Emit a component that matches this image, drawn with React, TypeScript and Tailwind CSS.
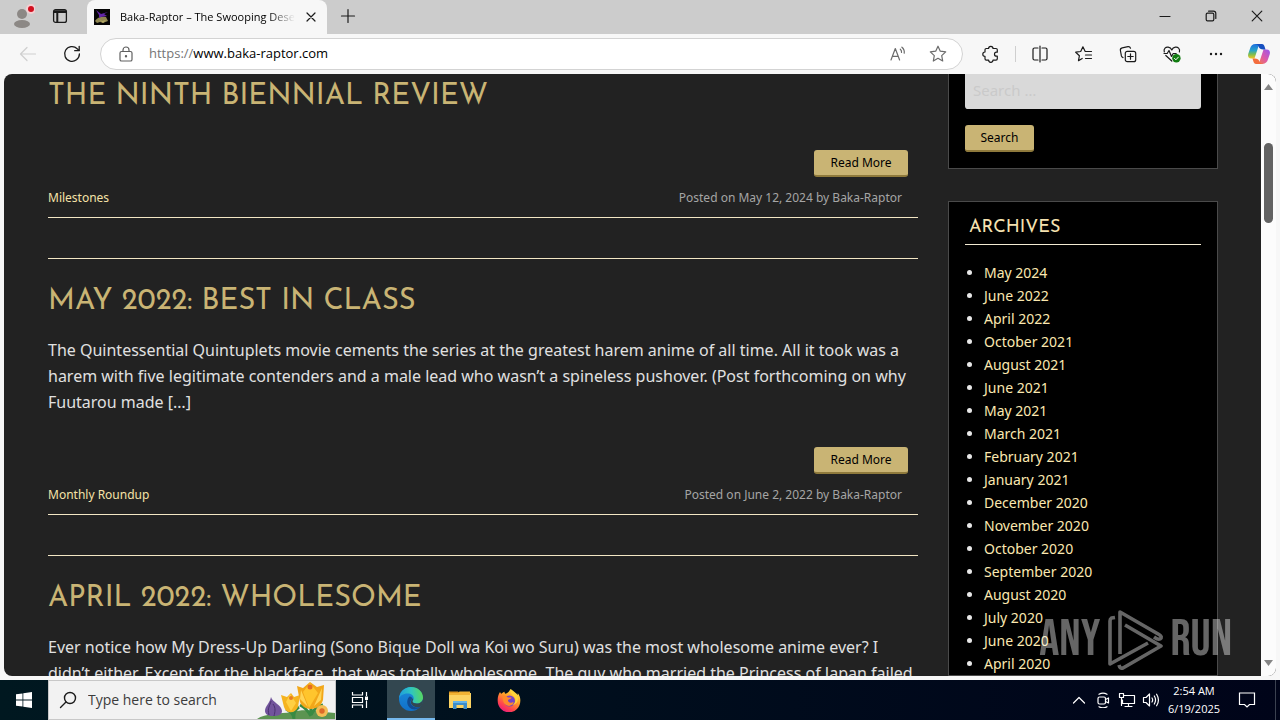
import React from "react";

type Post = { title: string; body?: string; tag: string; date: string };

const posts: Post[] = [
  { title: "The Ninth Biennial Review", tag: "Milestones", date: "May 12, 2024" },
  {
    title: "May 2022: Best in Class",
    body: "The Quintessential Quintuplets movie cements the series at the greatest harem anime of all time. All it took was a harem with five legitimate contenders and a male lead who wasn’t a spineless pushover. (Post forthcoming on why Fuutarou made […]",
    tag: "Monthly Roundup",
    date: "June 2, 2022",
  },
  {
    title: "April 2022: Wholesome",
    body: "Ever notice how My Dress-Up Darling (Sono Bique Doll wa Koi wo Suru) was the most wholesome anime ever? I didn’t either. Except for the blackface, that was totally wholesome. The guy who married the Princess of Japan failed […]",
    tag: "Monthly Roundup",
    date: "May 1, 2022",
  },
];

const archives = [
  "May 2024", "June 2022", "April 2022", "October 2021", "August 2021", "June 2021",
  "May 2021", "March 2021", "February 2021", "January 2021", "December 2020",
  "November 2020", "October 2020", "September 2020", "August 2020", "July 2020",
  "June 2020", "April 2020",
];

function Line({ size = 20, children, className = "" }: { size?: number; children: React.ReactNode; className?: string }) {
  return (
    <svg width={size} height={size} viewBox={`0 0 ${size} ${size}`} fill="none" stroke="currentColor" strokeWidth="1.2" strokeLinecap="round" strokeLinejoin="round" className={className} aria-hidden="true">
      {children}
    </svg>
  );
}

function IconButton({ label, className = "w-11", children }: { label: string; className?: string; children: React.ReactNode }) {
  return (
    <button type="button" aria-label={label} className={`flex h-8 shrink-0 items-center justify-center ${className}`}>
      {children}
    </button>
  );
}

function TitleBar() {
  return (
    <header className="flex h-[34px] shrink-0 bg-[#cccccc] text-[#1b1b1b]">
      <IconButton label="Profile" className="ml-1 w-9">
        <svg width="26" height="26" viewBox="0 0 26 26" aria-hidden="true">
          <circle cx="13" cy="11" r="5" fill="#8c8885" />
          <ellipse cx="13" cy="21" rx="8" ry="4" fill="#8c8885" />
          <circle cx="22" cy="6" r="5" fill="#f4cfd2" />
          <circle cx="22" cy="6" r="3" fill="#d1101f" />
        </svg>
      </IconButton>
      <IconButton label="Tab actions" className="w-10">
        <Line size={16}>
          <rect x="1.6" y="1.6" width="12.8" height="12.8" rx="2" strokeWidth="1.3" />
          <path d="M2 3.2H14M5.3 4V14" strokeWidth="2" strokeLinecap="butt" />
          <path d="M2 4.4H14" strokeWidth="1.2" />
        </Line>
      </IconButton>
      <div className="ml-[7px] flex w-60 items-center rounded-t-lg bg-[#f7f7f7] pl-[7px] pr-2">
        <svg width="16" height="16" viewBox="0 0 16 16" aria-hidden="true">
          <path fill="#050505" d="M0 0h16v16H0z" />
          <path d="M1 12C3 8 8 7 12 8l2 4-5 2-3-1-3 1z" fill="#8f8650" />
          <path d="M2 1l5 4 7-2-4 2 3 2-6 1-2 1 0-3z" fill="#6326a8" />
          <path d="M5 10l3 2 4-1-3 3z" fill="#b5a965" />
        </svg>
        <span className="ml-2.5 flex-1 overflow-hidden whitespace-nowrap text-[11px] text-black [mask-image:linear-gradient(to_right,black_85%,transparent)]">
          Baka-Raptor – The Swooping Desert
        </span>
        <button type="button" aria-label="Close tab" className="ml-2 flex size-4 items-center justify-center">
          <Line size={12}><path d="M2 2l8 8M10 2l-8 8" /></Line>
        </button>
      </div>
      <IconButton label="New tab" className="w-[42px]">
        <Line size={16}><path d="M8 1.500v13M1.500 8h13" /></Line>
      </IconButton>
      <div className="ml-auto flex">
        <IconButton label="Minimize" className="w-[46px]">
          <Line size={12}><path d="M1 6.500h10" /></Line>
        </IconButton>
        <IconButton label="Restore" className="w-[46px]">
          <Line size={12}>
            <rect x="1.200" y="3.200" width="7.600" height="7.600" rx="1.300" />
            <path d="M3.600 1.200h4.800a2.400 2.400 0 0 1 2.400 2.400v4.800" />
          </Line>
        </IconButton>
        <IconButton label="Close" className="w-[46px]">
          <Line size={12}><path d="M1.200 1.200l9.600 9.600M10.800 1.200L1.200 10.800" /></Line>
        </IconButton>
      </div>
    </header>
  );
}

function Toolbar() {
  return (
    <div className="flex h-10 shrink-0 items-center bg-[#f7f7f7] text-[#1b1b1b]">
      <IconButton label="Back" className="ml-1.5 w-11 text-[#cfcfcf]">
        <Line><path d="M17.500 10H2.800M9 3.500L2.500 10 9 16.500" /></Line>
      </IconButton>
      <IconButton label="Refresh">
        <Line>
          <path d="M17.400 10a7.400 7.400 0 1 1-2.200-5.300L17 6.400" strokeWidth="1.300" />
          <path d="M17.200 2.300v4.400h-4.500" strokeWidth="1.300" />
        </Line>
      </IconButton>
      <div className="ml-1.5 flex h-8 flex-1 items-center rounded-full border border-[#d3d3d3] bg-white">
        <IconButton label="Site information" className="ml-4 w-[18px] text-[#606060]">
          <Line size={18}>
            <rect x="3" y="6.500" width="12" height="9.500" rx="1.600" />
            <path d="M6 6.500V5a3 3 0 0 1 6 0v1.500" />
            <circle cx="9" cy="11.200" r="0.600" fill="currentColor" />
          </Line>
        </IconButton>
        <label htmlFor="address" className="ml-[14px] text-[13px] text-[#767676]">https://</label>
        <input id="address" type="text" defaultValue="www.baka-raptor.com" className="min-w-0 flex-1 bg-transparent text-[13px] text-black outline-none" />
        <IconButton label="Read aloud" className="w-10 text-[#6b6b6b]">
          <Line>
            <path d="M3 16L7.300 4.500 11.600 16M4.500 12.300h5.600" />
            <path d="M12.300 5.200a3.400 3.400 0 0 1 1.200 3.200M13.900 3.200a6.400 6.400 0 0 1 2.300 6" />
          </Line>
        </IconButton>
        <IconButton label="Add to favorites" className="mr-1 w-10 text-[#6b6b6b]">
          <Line>
            <path d="M10 2.200l2.300 5 5.400.7-4 3.700 1 5.400-4.700-2.700L5.300 17l1-5.400-4-3.700 5.400-.7z" />
          </Line>
        </IconButton>
      </div>
      <IconButton label="Extensions" className="ml-1.5 w-11">
        <Line>
          <path d="M7.600 4.500a2.200 2.200 0 0 1 4.400 0h3a1.300 1.300 0 0 1 1.300 1.300V8.200h-.8a2 2 0 0 0 0 4h.8v2.600a1.300 1.300 0 0 1-1.300 1.300h-3a2.200 2.200 0 0 1-4.400 0H5.300A1.300 1.300 0 0 1 4 14.800v-2.400a2.200 2.200 0 0 1 0-4.400V5.800a1.300 1.300 0 0 1 1.300-1.300z" />
        </Line>
      </IconButton>
      <span className="mx-0.5 h-4 w-px bg-[#cfcfcf]" />
      <IconButton label="Split screen">
        <Line>
          <path d="M8 4H4.500A1.500 1.500 0 0 0 3 5.500v9A1.500 1.500 0 0 0 4.500 16H8M12 4h3.500A1.500 1.500 0 0 1 17 5.500v9a1.500 1.500 0 0 1-1.500 1.500H12M10 2v16" />
        </Line>
      </IconButton>
      <IconButton label="Favorites">
        <Line>
          <path d="M8.200 14.500l-3.700 2.200.9-5-3.700-3.500 5-.7 2.200-4.700L11.200 7.500h6.300M11.500 11h6M11.500 14.500h6" />
        </Line>
      </IconButton>
      <IconButton label="Collections">
        <Line>
          <rect x="7.300" y="7.300" width="10.400" height="10.400" rx="2" />
          <path d="M12.500 9.800v5.400M9.800 12.500h5.400" />
          <path d="M5 13.600a2.300 2.300 0 0 1-1.600-1.700l-1-5.400a2.300 2.300 0 0 1 1.800-2.600l5.800-1.200a2.300 2.300 0 0 1 2.500 1.500" />
        </Line>
      </IconButton>
      <IconButton label="Browser essentials">
        <Line>
          <path d="M2.300 8C1.200 4.500 4 2.800 6.200 3.200 8 3.500 9.400 5 9.800 6c.4-1 1.800-2.500 3.600-2.800 2.200-.4 5 1.300 4 4.800M3.800 11.500l6 5.500M2 9.500h3.200l1.800-3 2.500 6 1.700-3h3" />
          <circle cx="14.400" cy="14.300" r="4.200" fill="#107c10" stroke="none" />
          <path d="M12.500 14.400l1.400 1.400 2.500-2.700" stroke="#fff" strokeWidth="1" />
        </Line>
      </IconButton>
      <IconButton label="Settings and more">
        <svg width="20" height="20" aria-hidden="true"><g fill="currentColor"><circle cx="5" cy="10" r="1.200" /><circle cx="10" cy="10" r="1.200" /><circle cx="15" cy="10" r="1.200" /></g></svg>
      </IconButton>
      <IconButton label="Copilot" className="w-[42px]">
        <svg width="24" height="24" viewBox="0 0 24 24" aria-hidden="true">
          <defs>
            <linearGradient id="cpA" x1="0" y1="0" x2="0" y2="1"><stop offset="0" stopColor="#1e6fe0" /><stop offset=".45" stopColor="#28a5c9" /><stop offset=".7" stopColor="#78bd55" /><stop offset="1" stopColor="#f3c622" /></linearGradient>
            <linearGradient id="cpB" x1="1" y1="0" x2="0" y2="1"><stop offset="0" stopColor="#9a55ef" /><stop offset=".5" stopColor="#dd5aa8" /><stop offset="1" stopColor="#f8803c" /></linearGradient>
          </defs>
          <path d="M16.500 7.500h3c2.800 0 4 2 3.300 4.600l-1.800 5.200c-.8 2.700-2.500 4.700-5.500 4.700H9.200c2.300 0 3-1.300 3.600-3.200z" fill="url(#cpB)" />
          <path d="M7.500 16.500h-3c-2.800 0-4-2-3.300-4.600L3 6.700C3.800 4 5.500 2 8.500 2h6.300c-2.300 0-3 1.300-3.600 3.200z" fill="url(#cpA)" />
          <path d="M8.500 2h6.300c2 0 2.500 1.500 3 3.300l.7 2.200h-2.200c-2.500 0-4-1-4.500-2.500C11.300 3.500 10.500 2.300 8.500 2z" fill="#174fc0" />
          <path d="M15.500 22H9.200c-2 0-2.500-1.500-3-3.300l-.7-2.200h2.200c2.500 0 4 1 4.500 2.500.5 1.500 1.300 2.700 3.300 3z" fill="#f36d3d" />
        </svg>
      </IconButton>
    </div>
  );
}

const goldButton = "h-[27px] rounded-[3px] border-b-2 border-[#8f7a3c] bg-[#c9b474] text-xs text-black";

function Article({ post, first }: { post: Post; first: boolean }) {
  return (
    <article className={first ? "mb-10 border-b border-[#f2e6c4] pt-[3px]" : "mb-10 border-y border-[#f2e6c4] pt-[23px]"}>
      <h2 className="font-['Josefin_Sans',Lato,sans-serif] text-[29px] leading-10 text-[#c9b474] uppercase">
        <a href="#post">{post.title}</a>
      </h2>
      {post.body && <p className="mt-[15px] text-base leading-[26px] text-[#e0e0e0]">{post.body}</p>}
      <div className={`flex justify-end pr-2.5 ${first ? "mt-[33px]" : "mt-8"}`}>
        <button type="button" className={`w-[94px] ${goldButton}`}>Read More</button>
      </div>
      <footer className="mt-[11px] flex justify-between pb-[9px] text-xs leading-5">
        <a href="#tag" className="text-[#f5e2a8]">{post.tag}</a>
        <span className="pr-4 text-[#a5a5a5]">Posted on {post.date} by Baka-Raptor</span>
      </footer>
    </article>
  );
}

function Sidebar() {
  return (
    <aside className="w-[270px] shrink-0">
      <form className="border border-t-0 border-[#4a4a4a] bg-black px-4 pb-4">
        <input type="search" aria-label="Search the site" placeholder="Search …" className="mb-4 block h-[35px] w-full rounded-b-[3px] bg-[#d9d9d9] px-2 pb-1 text-[15px] outline-none placeholder:text-[#cacaca]" />
        <button type="button" className={`block w-[69px] ${goldButton}`}>Search</button>
      </form>
      <section className="mt-8 border border-[#4a4a4a] bg-black px-4 pt-[14px]">
        <h3 className="border-b border-[#f2ead2] pb-1 pl-1 font-['Josefin_Sans',Lato,sans-serif] text-lg leading-6 text-[#f5e2b0] uppercase">Archives</h3>
        <ul className="mt-4 list-disc pl-[19px] text-[#e8e8e8]">
          {archives.map((m) => (
            <li key={m} className="text-sm leading-[23px]">
              <a href="#archive" className="text-[#fbe8b0]">{m}</a>
            </li>
          ))}
        </ul>
      </section>
    </aside>
  );
}

function ScrollBar() {
  return (
    <div className="flex w-[15px] shrink-0 flex-col items-center bg-[#fcfcfc] py-2.5" aria-hidden="true">
      <svg width="9" height="6"><path d="M0 6L4.500 0 9 6z" fill="#858585" /></svg>
      <div className="mt-[53px] h-20 w-[9px] rounded-full bg-[#636363]" />
      <svg width="9" height="6" className="mt-auto"><path d="M0 0l4.500 6L9 0z" fill="#858585" /></svg>
    </div>
  );
}

function Watermark() {
  return (
    <div className="absolute right-12 bottom-[46px] flex items-center gap-1.5 font-['Bebas_Neue',Oswald,'Roboto_Condensed','Open_Sans_Condensed',sans-serif] text-[50px] leading-[68px] text-white opacity-40">
      <span>ANY</span>
      <svg width="58" height="62" viewBox="0 0 58 62" fill="none" stroke="currentColor" strokeWidth="3.600" strokeLinejoin="round" aria-hidden="true">
        <path d="M9 8.500L5.500 9Q4 10 4 12V55L42 34" />
        <path d="M14 45V3L53 25.500Q57 28 54 30 52 31 48 28" />
        <path d="M19 16L55 37L17 59Q14 60 13 56" />
      </svg>
      <span>RUN</span>
    </div>
  );
}

function Flowers() {
  return (
    <svg width="78" height="39" viewBox="0 0 78 39" className="shrink-0 self-end" aria-hidden="true">
      <path d="M0 39C8 33 24 34 34 32 50 28 62 32 78 33v6z" fill="#5c9451" />
      <path d="M37 39c0-5-4-8-8-10M37 39c-1-6 2-10 5-12M54 34c0-8-1-14 0-18M54 36c-4-7-7-9-11-11M54 35c3-7 7-9 12-10" stroke="#398a43" strokeWidth="3" fill="none" />
      <path d="M14 17c1 5 11 8 11 14 0 4-4 5-9 5s-8-2-8-5c0-5 5-8 6-14z" fill="#72549c" />
      <path d="M14 21c-1 5-4 7-2 14M16 24c3 4 2 8 1 12" stroke="#49336f" strokeWidth="1" fill="none" />
      <path d="M24 15l6 2 4-4 3 4 6-2-2 12c-3 7-12 7-14 0z" fill="#f5b31f" />
      <path d="M33 14l-4 8 5 9 5-8z" fill="#ffd044" />
      <path d="M40 6l6 2 7-6 7 5 7-2-1 15c-3 11-19 12-23 2z" fill="#f2a719" />
      <path d="M53 3l-7 9 6 16 9-15z" fill="#ffc52d" />
      <path d="M44 10l7 17-8-8zM65 8l-8 18 7-6z" fill="#ffd456" />
      <circle cx="53" cy="7" r="2.500" fill="#e36c23" />
      <circle cx="34" cy="18" r="2" fill="#e77c25" />
      <circle cx="65" cy="31" r="6" fill="#f3bd55" />
      <circle cx="65" cy="31" r="2.700" fill="#dd6a29" />
    </svg>
  );
}

function Taskbar() {
  return (
    <footer className="flex h-10 shrink-0 bg-linear-to-r from-[#001820] to-[#000419] font-['Open_Sans',sans-serif] text-white">
      <button type="button" aria-label="Start" className="flex w-12 items-center justify-center">
        <svg width="16" height="16" viewBox="0 0 16 16" fill="#fff" aria-hidden="true"><path d="M0 2.300l6.500-.9v6.200H0zM7.300 1.300L16 0v7.600H7.300zM0 8.400h6.500v6.200L0 13.700zM7.300 8.400H16V16l-8.700-1.300z" /></svg>
      </button>
      <div className="flex w-72 items-center border border-[#c8c8c8] bg-[#f2f2f2] text-[#1b1b1b]">
        <Line size={18} className="ml-2.5"><circle cx="11" cy="7" r="5.500" strokeWidth="1.400" /><path d="M7 11l-5.500 5.500" strokeWidth="1.400" /></Line>
        <input type="text" aria-label="Type here to search" placeholder="Type here to search" className="ml-[11px] min-w-0 flex-1 bg-transparent text-sm outline-none placeholder:text-[#3c3c3c]" />
        <Flowers />
      </div>
      <button type="button" aria-label="Task view" className="flex w-[51px] items-center justify-center pr-1">
        <svg width="18" height="16" viewBox="0 0 18 16" fill="none" stroke="#fff" strokeWidth="1.200" aria-hidden="true">
          <path d="M1.500 0v3h10V0M1.500 16v-3h10v3M1.500 5.500h10v5h-10zM15.500 0v4M15.500 8.500V16" />
          <path d="M14 4.500h3v3.500h-3z" fill="#fff" stroke="none" />
        </svg>
      </button>
      <button type="button" aria-label="Microsoft Edge" className="flex w-12 items-center justify-center border-b-2 border-[#76b9ed] bg-[#334750]">
        <svg width="24" height="24" viewBox="0 0 24 24" aria-hidden="true">
          <defs>
            <linearGradient id="egA" x1="0" y1=".3" x2="1" y2=".2"><stop offset="0" stopColor="#1f9ddd" /><stop offset=".5" stopColor="#2fc5c0" /><stop offset="1" stopColor="#5bd957" /></linearGradient>
            <linearGradient id="egB" x1="0" y1="0" x2="0" y2="1"><stop offset="0" stopColor="#1b8cda" /><stop offset="1" stopColor="#1170c9" /></linearGradient>
          </defs>
          <circle cx="12" cy="12" r="12" fill="url(#egB)" />
          <path d="M0 11.500C.5 5 5.500 0 12 0c7 0 12 5 12 10.500 0 4-3 6-6 6-2.500 0-4.500-.8-4.500-2 0-.8 1.200-1 1.200-3.200C14.700 8.500 12 6.500 8.500 6.500 4 6.500 1 9 0 11.500z" fill="url(#egA)" />
          <path d="M10.500 9.500C8 11.500 7 17 10.500 20.500c3 3 8.500 2.300 11-.7-3 1.300-7.500.7-9.300-2.300-1.200-2-1-4.500 1.300-5.500-.3-1.500-1.500-2.600-3-2.500z" fill="#124b91" />
          <path d="M13.500 14.500c0 1.200 2 2 4.500 2 3 0 5.200-1.500 5.900-4.200.3 3-.5 5.500-2.300 7.400-3.800 1.200-8 .2-9.300-2.600-.7-1.500-.5-4.500 1.700-5.600.4 1.300-.5 2-.5 3z" fill="#334750" />
        </svg>
      </button>
      <button type="button" aria-label="File Explorer" className="flex w-[50px] items-center justify-center">
        <svg width="22" height="20" viewBox="0 0 22 20" aria-hidden="true">
          <path d="M0 1.500h9l2 2H0z" fill="#dc951e" />
          <path d="M0 3h22v15H0z" fill="#fcd362" />
          <path d="M0 3h9l1.500-1.500H21V5H0z" fill="#f1b334" />
          <path d="M4 11h14v8h-3.500v-4h-7v4H4z" fill="#3d8dca" />
          <path d="M4 11h14v2H4z" fill="#64b3e8" />
        </svg>
      </button>
      <button type="button" aria-label="Firefox" className="flex w-12 items-center justify-center">
        <svg width="24" height="24" viewBox="0 0 24 24" aria-hidden="true">
          <defs><linearGradient id="ffA" x1=".8" y1="0" x2=".2" y2="1"><stop offset="0" stopColor="#fff04a" /><stop offset=".4" stopColor="#ff9d28" /><stop offset=".75" stopColor="#ff4050" /><stop offset="1" stopColor="#e31587" /></linearGradient></defs>
          <path d="M3 4c.5 1 1 1.500 1.500 1.800C5.500 4.500 6.500 4 7.500 3.700c0 1 .4 1.600 1 2C10.500 5 12 4 13.500 1c3 2 6 4.500 7.500 6l-.3-2c2 2.500 2.800 5 2.600 8A11.300 11.300 0 0 1 .7 13C.5 9.500 1.300 6.500 3 4z" fill="url(#ffA)" />
          <circle cx="12.500" cy="13" r="5.500" fill="#7444c9" />
          <path d="M5.500 8c3-.8 4.500.4 5.500 1.500h3.500c0 1.500-3 1.700-3.500 2.500-.3 1.500 1.500 3.300 4 2.500 1.300-.4 1.800-.2 1.500.6-1 2.500-4 3.400-6.500 2.400C6.500 16 5.500 12 5.500 8z" fill="#ff8a2a" />
          <path d="M14 1.500c-1 3 1 5 2.500 6.500 3 2.800 2.500 7-1 9 4-.5 6-4 5.300-7.500C20 6 16 4.500 14 1.500z" fill="#ffd53a" />
        </svg>
      </button>
      <div className="ml-auto flex items-center">
        <button type="button" aria-label="Show hidden icons" className="flex w-6 justify-center"><Line size={14}><path d="M1.500 10L7 4.500l5.500 5.500" /></Line></button>
        <button type="button" aria-label="Meet now" className="flex w-6 justify-center">
          <Line size={16}><rect x="3" y="5" width="7.500" height="7" rx="1.500" /><path d="M10.500 7.500L13.500 6v5l-3-1.500M4 2.300q4-2.300 8 0M4 14.700q4 2.300 8 0" /></Line>
        </button>
        <button type="button" aria-label="Network" className="flex w-6 justify-center">
          <Line size={18}><path d="M6 4.500h10.500v8H4.500V9M10.500 12.500v3M7 15.500h7M1.500 2.500h4v4h-4zM3.500 6.500v8" /></Line>
        </button>
        <button type="button" aria-label="Volume" className="flex w-6 justify-center">
          <Line size={18}><path d="M1.500 6.500h2.500l3.500-3.500v12L4 11.500H1.500zM10 7q1.300 2 0 4M12.300 5q2.500 4 0 8M14.600 3.200q3.700 5.800 0 11.600" /></Line>
        </button>
        <time className="w-[62px] text-center text-[11px] leading-[18px]">2:54 AM<br />6/19/2025</time>
        <button type="button" aria-label="Notifications" className="flex w-11 justify-center">
          <Line size={18}><path d="M1.500 2h15v11.500h-5L9 16l-2.500-2.500h-5z" strokeLinejoin="miter" /></Line>
        </button>
        <span className="mr-1 ml-1.5 h-10 w-px bg-[#3b4150]" />
      </div>
    </footer>
  );
}

export default function App() {
  return (
    <div className="relative flex h-screen flex-col overflow-hidden bg-[#f7f7f7] font-['Open_Sans',sans-serif]">
      <TitleBar />
      <Toolbar />
      <div className="mx-1 mb-1 flex min-h-0 flex-1 overflow-hidden rounded-lg bg-[#222222] font-['Noto_Sans',sans-serif]">
        <div className="flex min-w-0 flex-1 gap-[30px] overflow-hidden pr-[43px] pl-11">
          <main className="min-w-0 flex-1">
            {posts.map((p, i) => <Article key={p.title} post={p} first={i === 0} />)}
          </main>
          <Sidebar />
        </div>
        <ScrollBar />
      </div>
      <Taskbar />
      <Watermark />
    </div>
  );
}
